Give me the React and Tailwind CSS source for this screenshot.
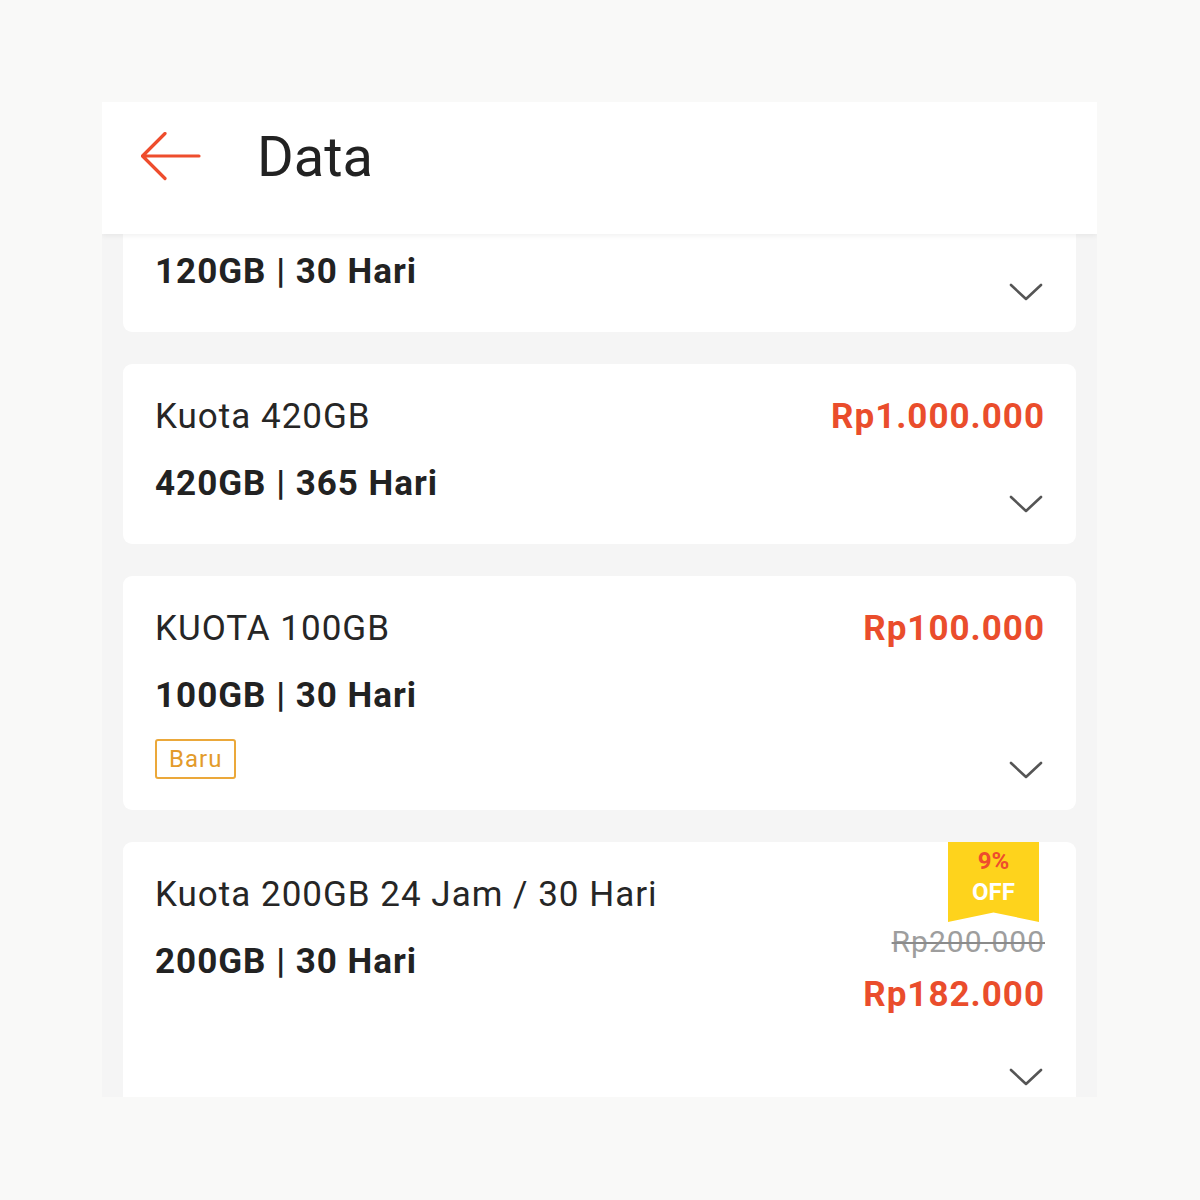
import React from 'react';

const packages = [
  { id: 'k420', name: 'Kuota 420GB', detail: '420GB | 365 Hari', price: 'Rp1.000.000' },
  { id: 'k100', name: 'KUOTA 100GB', detail: '100GB | 30 Hari', price: 'Rp100.000', isNew: true },
  {
    id: 'k200',
    name: 'Kuota 200GB 24 Jam / 30 Hari',
    detail: '200GB | 30 Hari',
    price: 'Rp182.000',
    oldPrice: 'Rp200.000',
    discount: '9%',
  },
];

function BackArrow() {
  return (
    <svg width="60" height="50" viewBox="0 0 60 50" fill="none">
      <path d="M1.5 24H58M24 1.5L1.5 24L24 46.5" stroke="#ee4d2d" strokeWidth="3.2" strokeLinecap="round" strokeLinejoin="round" />
    </svg>
  );
}

function Chevron() {
  return (
    <svg width="34" height="18" viewBox="0 0 34 18" fill="none">
      <path d="M2 2L17 16L32 2" stroke="#555" strokeWidth="2.6" strokeLinecap="round" strokeLinejoin="round" />
    </svg>
  );
}

function PackageCard({ pkg }) {
  return (
    <div className="flex justify-between rounded-[9px] bg-white pt-[30px] pb-[31px] pl-[32px] pr-[31px]">
      <div className="flex flex-col items-start">
        <div className="h-[46px] text-[35px] leading-[46px] tracking-[1px] text-[#262626]">{pkg.name}</div>
        <div className="mt-[21px] mb-[6px] h-[46px] text-[35px] font-bold leading-[46px] tracking-[1px] text-[#222]">{pkg.detail}</div>
        {pkg.isNew && (
          <div className="mt-[14px] flex h-[40px] items-center rounded-[3px] border-2 border-[#eba83a] px-[12px] text-[24px] tracking-[1px] text-[#e39b2b]">
            Baru
          </div>
        )}
      </div>
      <div className="flex flex-col items-end">
        {pkg.discount && (
          <div className="-mt-[30px] mr-[6px] flex h-[80px] w-[91px] flex-col items-center bg-[#fed31c] pt-[4px] text-[24px] font-bold leading-[31px] [clip-path:polygon(0_0,100%_0,100%_100%,50%_88%,0_100%)]">
            <span className="text-[#ee4d2d]">{pkg.discount}</span>
            <span className="text-white">OFF</span>
          </div>
        )}
        {pkg.oldPrice && (
          <div className="mt-[2px] h-[36px] text-[30px] leading-[36px] tracking-[1px] text-[#9e9e9e] line-through decoration-[#8a8a8a] decoration-2">{pkg.oldPrice}</div>
        )}
        <div className={`${pkg.oldPrice ? 'mt-[12px]' : ''} h-[46px] text-[35px] font-bold leading-[46px] tracking-[1px] text-[#ea4d2c]`}>{pkg.price}</div>
        <div className="mt-auto mr-[2px] pt-[50px]">
          <Chevron />
        </div>
      </div>
    </div>
  );
}

export default function App() {
  return (
    <div className="min-h-[1200px] bg-[#f9f9f8] pt-[102px] pl-[102px]" style={{ fontFamily: 'Roboto, "Liberation Sans", sans-serif' }}>
      <div className="flex h-[995px] w-[995px] flex-col overflow-hidden bg-[#f5f5f5]">
        <header className="relative z-10 flex h-[132px] shrink-0 items-center bg-white pb-[22px] pl-[39px] shadow-[0_2px_5px_rgba(0,0,0,0.06)]">
          <BackArrow />
          <h1 className="ml-[56px] text-[56px] leading-none text-[#222]">Data</h1>
        </header>
        <div className="-mt-[82px] flex flex-col gap-[32px] px-[21px]">
          <div className="flex justify-between rounded-[9px] bg-white pt-[30px] pb-[31px] pl-[32px] pr-[31px]">
            <div className="flex flex-col">
              <div className="h-[46px]" />
              <div className="mt-[21px] mb-[6px] h-[46px] text-[35px] font-bold leading-[46px] tracking-[1px] text-[#222]">120GB | 30 Hari</div>
            </div>
            <div className="flex flex-col justify-end pr-[2px]">
              <Chevron />
            </div>
          </div>
          {packages.map((pkg) => (
            <PackageCard key={pkg.id} pkg={pkg} />
          ))}
        </div>
      </div>
    </div>
  );
}
